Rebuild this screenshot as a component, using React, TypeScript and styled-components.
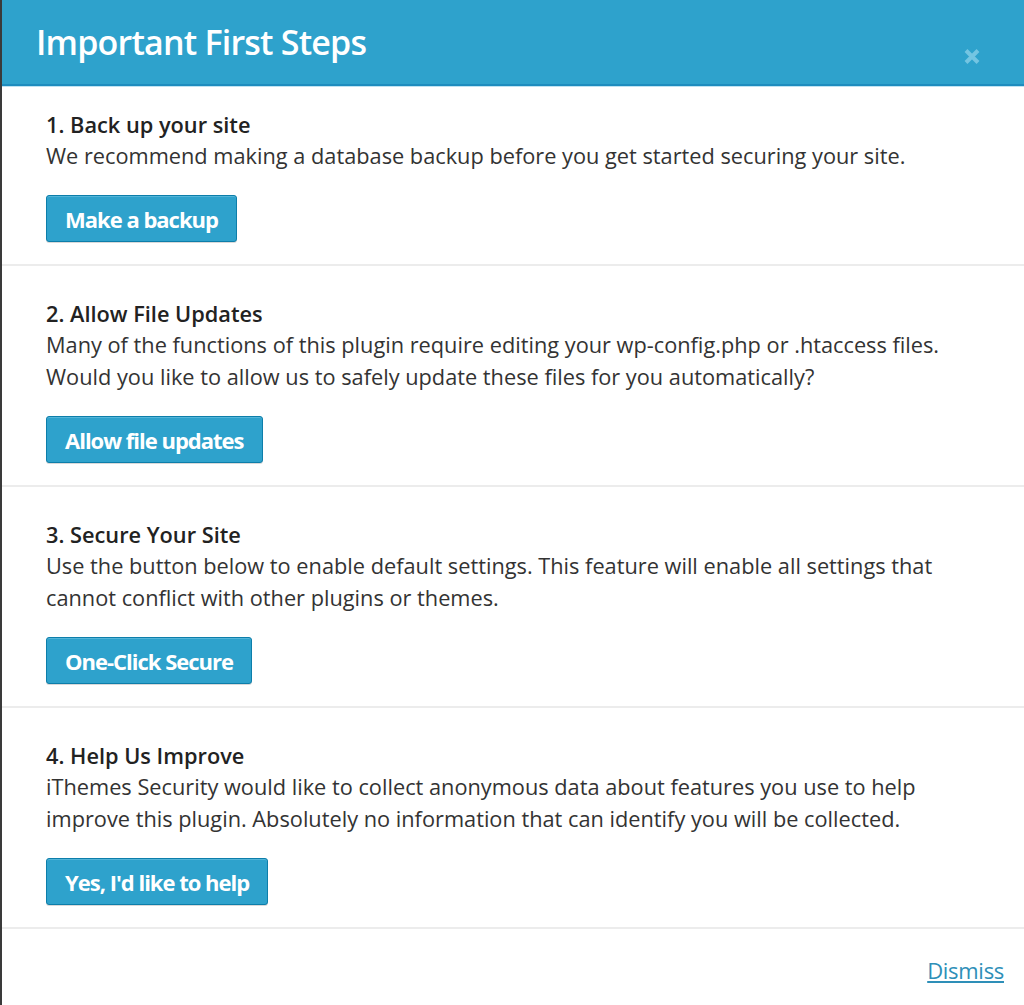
import React from "react";
import styled, { createGlobalStyle } from "styled-components";

const GlobalStyle = createGlobalStyle`
  html, body {
    margin: 0;
    padding: 0;
    background: #ffffff;
  }
  body {
    font-family: "Open Sans", "Noto Sans", sans-serif;
    color: #333333;
  }
`;

const Modal = styled.div`
  box-sizing: border-box;
  width: 1024px;
  min-height: 1005px;
  border-left: 2px solid #3a3a3a;
  background: #ffffff;
  display: flex;
  flex-direction: column;
`;

const Header = styled.div`
  box-sizing: border-box;
  height: 86px;
  background-color: #2ea2cc;
  border-bottom: 2px solid #1e8cbe;
  box-shadow: 0 1px 0 #bfe3f2;
  display: flex;
  align-items: flex-start;
  justify-content: space-between;
  padding: 18px 43px 0 34px;
`;

const Title = styled.h1`
  margin: 0;
  color: #ffffff;
  font-size: 34px;
  font-weight: 600;
  letter-spacing: -0.8px;
  line-height: 48px;
`;

const Close = styled.button`
  margin-top: 30px;
  padding: 0;
  width: 18px;
  height: 17px;
  border: 0;
  background: transparent;
  cursor: pointer;
  display: flex;
`;

const Step = styled.section`
  padding: 33px 44px 22px 44px;
  border-bottom: 2px solid #ececec;

  &:first-of-type {
    padding-top: 24px;
  }
`;

const StepTitle = styled.h2`
  margin: 0;
  font-size: 21.75px;
  font-weight: 600;
  line-height: 30px;
  color: #222222;
`;

const StepText = styled.p`
  margin: 0;
  font-size: 21.75px;
  line-height: 32px;
  color: #333333;
`;

const Button = styled.button`
  margin-top: 23px;
  height: 47px;
  padding: 0 18px;
  background-color: #2ea2cc;
  border: 1px solid #0d7eaa;
  border-radius: 3px;
  box-shadow: inset 0 1px 0 rgba(120, 200, 230, 0.5), 0 1px 0 rgba(0, 0, 0, 0.15);
  color: #ffffff;
  font-family: "Open Sans", sans-serif;
  font-size: 22px;
  font-weight: 700;
  letter-spacing: -1px;
  cursor: pointer;
`;

const Footer = styled.div`
  display: flex;
  justify-content: flex-end;
  padding: 26px 20px 0 0;
`;

const Dismiss = styled.a`
  color: #2e8fb8;
  font-size: 22px;
  text-decoration: underline;
  letter-spacing: -0.3px;
  cursor: pointer;
`;

interface StepData {
  title: string;
  lines: Array<string>;
  action: string;
}

const steps: Array<StepData> = [
  {
    title: "1. Back up your site",
    lines: [
      "We recommend making a database backup before you get started securing your site.",
    ],
    action: "Make a backup",
  },
  {
    title: "2. Allow File Updates",
    lines: [
      "Many of the functions of this plugin require editing your wp-config.php or .htaccess files.",
      "Would you like to allow us to safely update these files for you automatically?",
    ],
    action: "Allow file updates",
  },
  {
    title: "3. Secure Your Site",
    lines: [
      "Use the button below to enable default settings. This feature will enable all settings that",
      "cannot conflict with other plugins or themes.",
    ],
    action: "One-Click Secure",
  },
  {
    title: "4. Help Us Improve",
    lines: [
      "iThemes Security would like to collect anonymous data about features you use to help",
      "improve this plugin. Absolutely no information that can identify you will be collected.",
    ],
    action: "Yes, I'd like to help",
  },
];

function App() {
  return (
    <>
      <GlobalStyle />
      <Modal>
        <Header>
          <Title>Important First Steps</Title>
          <Close aria-label="Close">
            <svg width="18" height="17" viewBox="0 0 18 17">
              <path
                d="M3 2.5 L15 14.5 M15 2.5 L3 14.5"
                stroke="#74c5e2"
                strokeWidth="4"
                strokeLinecap="butt"
                fill="none"
              />
            </svg>
          </Close>
        </Header>
        {steps.map((step) => (
          <Step key={step.title}>
            <StepTitle>{step.title}</StepTitle>
            {step.lines.map((line) => (
              <StepText key={line}>{line}</StepText>
            ))}
            <Button>{step.action}</Button>
          </Step>
        ))}
        <Footer>
          <Dismiss>Dismiss</Dismiss>
        </Footer>
      </Modal>
    </>
  );
}

export default App;
